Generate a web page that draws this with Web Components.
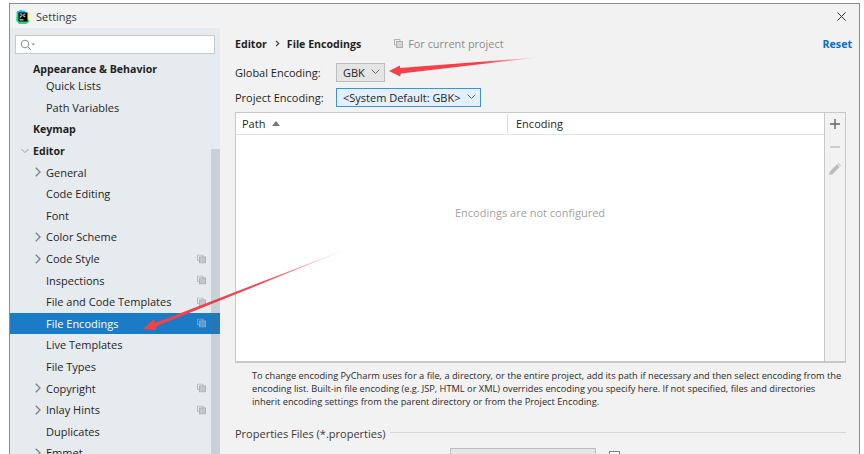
<!DOCTYPE html>
<html>
<head>
<meta charset="utf-8">
<title>Settings</title>
<style>
  html, body { margin: 0; height: 100%; background: #fff; overflow: hidden; }
  body { font: 11px "Open Sans", "Liberation Sans", sans-serif; color: #1f1f1f; }
</style>
</head>
<body>
<settings-window>
  <settings-sidebar slot="side">
    <tree-row bold indent="33" style="height:17px;margin-top:6px">Appearance &amp; Behavior</tree-row>
    <tree-row indent="46" style="margin-top:-2px">Quick Lists</tree-row>
    <tree-row indent="46">Path Variables</tree-row>
    <tree-row bold indent="33">Keymap</tree-row>
    <tree-row bold indent="33" arrow="down">Editor</tree-row>
    <tree-row indent="46" arrow="right">General</tree-row>
    <tree-row indent="46">Code Editing</tree-row>
    <tree-row indent="46">Font</tree-row>
    <tree-row indent="46" arrow="right">Color Scheme</tree-row>
    <tree-row indent="46" arrow="right" copy>Code Style</tree-row>
    <tree-row indent="46" copy>Inspections</tree-row>
    <tree-row indent="46" copy>File and Code Templates</tree-row>
    <tree-row indent="46" copy selected>File Encodings</tree-row>
    <tree-row indent="46">Live Templates</tree-row>
    <tree-row indent="46">File Types</tree-row>
    <tree-row indent="46" arrow="right" copy>Copyright</tree-row>
    <tree-row indent="46" arrow="right" copy>Inlay Hints</tree-row>
    <tree-row indent="46">Duplicates</tree-row>
    <tree-row indent="46" arrow="right">Emmet</tree-row>
  </settings-sidebar>
  <encodings-panel slot="main"></encodings-panel>
</settings-window>
<arrow-overlay></arrow-overlay>

<script>
class SettingsWindow extends HTMLElement {
  constructor() {
    super();
    this.attachShadow({ mode: 'open' });
    this.shadowRoot.innerHTML = `
      <style>
        :host {
          display: flex;
          flex-direction: column;
          box-sizing: border-box;
          width: 851px;
          height: 470px;
          margin: 3px 0 0 9px;
          border: 1px solid #8c8c8c;
          background: #f2f2f2;
        }
        .title {
          height: 24px;
          flex: none;
          display: flex;
          align-items: center;
          padding: 1px 13px 0 6px;
          box-sizing: border-box;
          gap: 6px;
          color: #3c3c3c;
        }
        .title span { flex: 1; }
        .body { flex: 1; display: flex; min-height: 0; }
        .side { width: 210px; flex: none; }
        .main { flex: 1; min-width: 0; }
        svg { display: block; }
      </style>
      <div class="title">
        <svg width="14" height="14" viewBox="0 0 14 14">
          <path d="M1 1h8l4 3v8l-3 2H3L0 10z" fill="#21d789"/>
          <path d="M9 1l4 3v6l-3-1z" fill="#fcf84a"/>
          <path d="M0 3l4-3 6 1-5 3z" fill="#07c3f2"/>
          <rect x="2.500" y="2.500" width="9" height="9" fill="#000"/>
          <rect x="3.500" y="9.400" width="4" height="1" fill="#fff"/>
          <path d="M3.600 4h1.500a1 1 0 010 2.200H4.200V8M7.800 4.200h1.500M7.800 4.200v2.400h1.500" fill="none" stroke="#fff" stroke-width=".8"/>
        </svg>
        <span>Settings</span>
        <svg width="9" height="9" viewBox="0 0 9 9"><path d="M.4.4l8.200 8.200M8.600.4L.4 8.600" stroke="#333" stroke-width="1"/></svg>
      </div>
      <div class="body">
        <div class="side"><slot name="side"></slot></div>
        <div class="main"><slot name="main"></slot></div>
      </div>
    `;
  }
}

class SettingsSidebar extends HTMLElement {
  constructor() {
    super();
    this.attachShadow({ mode: 'open' });
    this.shadowRoot.innerHTML = `
      <style>
        :host { display: block; position: relative; height: 100%; background: #e6ebf0; overflow: hidden; }
        .search {
          box-sizing: border-box;
          height: 19px;
          margin: 7px 5px 6px 5px;
          background: #fff;
          border: 1px solid #c9c9c9;
          display: flex;
          align-items: center;
          padding-left: 4px;
        }
        .thumb { position: absolute; z-index: 2; right: 0; top: 121px; bottom: 0; width: 9px; background: rgba(90, 100, 110, .2); }
      </style>
      <div class="search">
        <svg width="16" height="12" viewBox="0 0 16 12">
          <circle cx="5" cy="5" r="3.800" fill="none" stroke="#8f8f8f"/>
          <path d="M7.800 7.800l3 3" stroke="#8f8f8f"/>
          <path d="M11.500 4.500h3.400L13.200 6.500z" fill="#8f8f8f"/>
        </svg>
      </div>
      <div class="thumb"></div>
      <slot></slot>
    `;
  }
}

class TreeRow extends HTMLElement {
  connectedCallback() {
    if (this.shadowRoot) return;
    this.attachShadow({ mode: 'open' });
    const indent = this.getAttribute('indent') - 10;
    const arrow = this.getAttribute('arrow');
    const selected = this.hasAttribute('selected');
    let arrowSvg = '';
    if (arrow === 'right') {
      arrowSvg = `<svg class="arr" style="left:${indent - 11}px" width="6" height="10" viewBox="0 0 6 10"><path d="M.8.8L5 5 .8 9.200" fill="none" stroke="#808080" stroke-width="1.300"/></svg>`;
    } else if (arrow === 'down') {
      arrowSvg = `<svg class="arr" style="left:${indent - 12}px" width="8" height="5" viewBox="0 0 8 5"><path d="M.5.5L4 4 7.500.5" fill="none" stroke="#9a9a9a"/></svg>`;
    }
    const copy = this.hasAttribute('copy')
      ? `<svg class="copy" width="9" height="9" viewBox="0 0 9 9"><path d="M.5.5h5.500v2M.5.5v5.500h2" fill="none" stroke="${selected ? '#7aa9d1' : '#b4b9be'}"/><rect x="2.500" y="2.500" width="6" height="6" fill="${selected ? '#5f9bce' : '#c3c8cd'}" stroke="${selected ? '#7aa9d1' : '#aeb3b8'}"/></svg>`
      : '';
    this.shadowRoot.innerHTML = `
      <style>
        :host {
          display: flex;
          align-items: center;
          position: relative;
          box-sizing: border-box;
          height: 21.600px;
          padding-left: ${indent}px;
          font-weight: ${this.hasAttribute('bold') ? 700 : 400};
          font-size: ${this.hasAttribute('bold') ? 10.6 : 11}px;
          color: ${selected ? '#fff' : '#1f1f1f'};
          background: ${selected ? '#1a7cc6' : 'transparent'};
          white-space: nowrap;
        }
        .arr { position: absolute; top: 50%; transform: translateY(-50%); }
        .copy { position: absolute; left: 187px; top: 50%; transform: translateY(-50%); }
      </style>
      ${arrowSvg}<slot></slot>${copy}
    `;
  }
}

class EncodingCombo extends HTMLElement {
  constructor() {
    super();
    this.attachShadow({ mode: 'open' });
    this.shadowRoot.innerHTML = `
      <style>
        :host {
          display: inline-flex;
          align-items: center;
          box-sizing: border-box;
          height: 19px;
          padding: 0 4px 0 6px;
          gap: 6px;
          border: 1px solid #bdbdbd;
          background: #e5e5e5;
          color: #1f1f1f;
        }
        :host([focused]) { border-color: #3c94d8; background: #e3f0fb; }
      </style>
      <slot></slot>
      <svg width="9" height="6" viewBox="0 0 9 6"><path d="M.7.7l3.800 3.800L8.300.7" fill="none" stroke="#666"/></svg>
    `;
  }
}

class EncodingsPanel extends HTMLElement {
  constructor() {
    super();
    this.attachShadow({ mode: 'open' });
    this.shadowRoot.innerHTML = `
      <style>
        :host {
          display: flex;
          flex-direction: column;
          height: 100%;
          box-sizing: border-box;
          padding: 0 13px 0 15px;
        }
        .crumbs { display: flex; align-items: center; height: 18px; margin-top: 7px; font-weight: 700; font-size: 10.600px; }
        .crumbs .sep { margin: 0 7px 0 8px; }
        .project { display: flex; align-items: center; gap: 5px; margin-left: 33px; font-weight: 400; font-size: 10.900px; color: #8c8c8c; }
        .reset { margin-left: auto; color: #0b6fc7; font-weight: 700; margin-right: -6px; }
        .line { display: flex; align-items: center; height: 19px; }
        .line label { width: 101px; flex: none; }
        .table {
          box-sizing: border-box;
          height: 253px;
          margin-top: 5px;
          display: flex;
          border: 1px solid #c8c8c8;
          border-bottom-width: 2px;
          background: #fff;
        }
        .grid { flex: 1; display: flex; flex-direction: column; min-width: 0; }
        .head { height: 21px; flex: none; display: flex; border-bottom: 1px solid #e4e4e4; }
        .head div { display: flex; align-items: center; padding-left: 8px; gap: 7px; }
        .head .path { width: 265px; padding-left: 6px; border-right: 1px solid #dcdcdc; margin: 1px 0; }
        .empty { flex: 1; display: flex; align-items: center; justify-content: center; color: #a3a3a3; padding-bottom: 70px; }
        .tools {
          width: 20px;
          flex: none;
          border-left: 1px solid #c8c8c8;
          background: #f2f2f2;
          display: flex;
          flex-direction: column;
          align-items: center;
          padding-top: 6px;
        }
        .tools .minus { margin-top: 13px; }
        .tools .pencil { margin-top: 11px; }
        .help { margin: 6px 0 0 17px; font-size: 9.250px; line-height: 13px; color: #2b2b2b; white-space: nowrap; }
        .group { display: flex; align-items: center; gap: 5px; margin-top: 17px; height: 16px; color: #3a3a3a; }
        .group i { flex: 1; height: 1px; margin-bottom: 2px; background: #d6d6d6; }
        .bottom { display: flex; align-items: flex-start; margin-top: 7px; margin-left: 215px; }
        .bottom .combo { width: 146px; height: 24px; box-sizing: border-box; border: 1px solid #bdbdbd; background: #e5e5e5; }
        .bottom .check { width: 11px; height: 11px; margin: 3px 0 0 13px; box-sizing: border-box; border: 1px solid #808080; background: #fff; }
      </style>
      <div class="crumbs">
        <span>Editor</span>
        <svg class="sep" width="5" height="7" viewBox="0 0 5 7"><path d="M1 .8l2.800 2.700L1 6.200" fill="none" stroke="#333" stroke-width="1.100"/></svg>
        <span>File Encodings</span>
        <span class="project">
          <svg width="9" height="9" viewBox="0 0 9 9"><path d="M.5.5h5.500v2M.5.5v5.500h2" fill="none" stroke="#b0b0b0"/><rect x="2.500" y="2.500" width="6" height="6" fill="#d4d4d4" stroke="#b0b0b0"/></svg>
          For current project
        </span>
        <span class="reset">Reset</span>
      </div>
      <div class="line" style="margin-top:10px"><label>Global Encoding:</label><encoding-combo>GBK</encoding-combo></div>
      <div class="line" style="margin-top:6px"><label>Project Encoding:</label><encoding-combo focused>&lt;System Default: GBK&gt;</encoding-combo></div>
      <div class="table">
        <div class="grid">
          <div class="head">
            <div class="path">Path <svg width="8" height="5" viewBox="0 0 8 5"><path d="M0 5l4-5 4 5z" fill="#777"/></svg></div>
            <div>Encoding</div>
          </div>
          <div class="empty">Encodings are not configured</div>
        </div>
        <div class="tools">
          <svg width="10" height="10" viewBox="0 0 10 10"><path d="M5 0v10M0 5h10" stroke="#666" stroke-width="1.400"/></svg>
          <svg class="minus" width="10" height="10" viewBox="0 0 10 10"><path d="M0 5h10" stroke="#bdbdbd" stroke-width="1.400"/></svg>
          <svg class="pencil" width="12" height="12" viewBox="0 0 12 12"><path d="M0 12l.8-3.500L8 1.300 10.700 4 3.500 11.200zM8.700.6l.8-.6L12 2.500l-.6.800z" fill="#bdbdbd"/></svg>
        </div>
      </div>
      <div class="help">To change encoding PyCharm uses for a file, a directory, or the entire project, add its path if necessary and then select encoding from the<br>encoding list. Built-in file encoding (e.g. JSP, HTML or XML) overrides encoding you specify here. If not specified, files and directories<br>inherit encoding settings from the parent directory or from the Project Encoding.</div>
      <div class="group">Properties Files (*.properties)<i></i></div>
      <div class="bottom"><div class="combo"></div><div class="check"></div></div>
    `;
  }
}

// the two red annotation arrows sit over the screenshot
class ArrowOverlay extends HTMLElement {
  constructor() {
    super();
    this.attachShadow({ mode: 'open' });
    this.shadowRoot.innerHTML = `
      <style>
        :host { position: absolute; left: 0; top: 0; width: 864px; height: 454px; pointer-events: none; }
      </style>
      <svg width="864" height="454" viewBox="0 0 864 454">
        <defs>
          <linearGradient id="fade1" gradientUnits="userSpaceOnUse" x1="480" y1="64" x2="543" y2="57">
            <stop offset="0" stop-color="#f4404a"/><stop offset="1" stop-color="#f4404a" stop-opacity="0"/>
          </linearGradient>
          <linearGradient id="fade2" gradientUnits="userSpaceOnUse" x1="260" y1="283" x2="352" y2="247">
            <stop offset="0" stop-color="#f4404a"/><stop offset="1" stop-color="#f4404a" stop-opacity="0"/>
          </linearGradient>
        </defs>
        <path d="M389 71L400 65.500L400 68L543 57L401 73.500L400 76.500z" fill="url(#fade1)"/>
        <path d="M143 329L154 319L155 323L352 247L157 326L155 330z" fill="url(#fade2)"/>
      </svg>
    `;
  }
}

customElements.define('settings-window', SettingsWindow);
customElements.define('settings-sidebar', SettingsSidebar);
customElements.define('tree-row', TreeRow);
customElements.define('encoding-combo', EncodingCombo);
customElements.define('encodings-panel', EncodingsPanel);
customElements.define('arrow-overlay', ArrowOverlay);
</script>
</body>
</html>
